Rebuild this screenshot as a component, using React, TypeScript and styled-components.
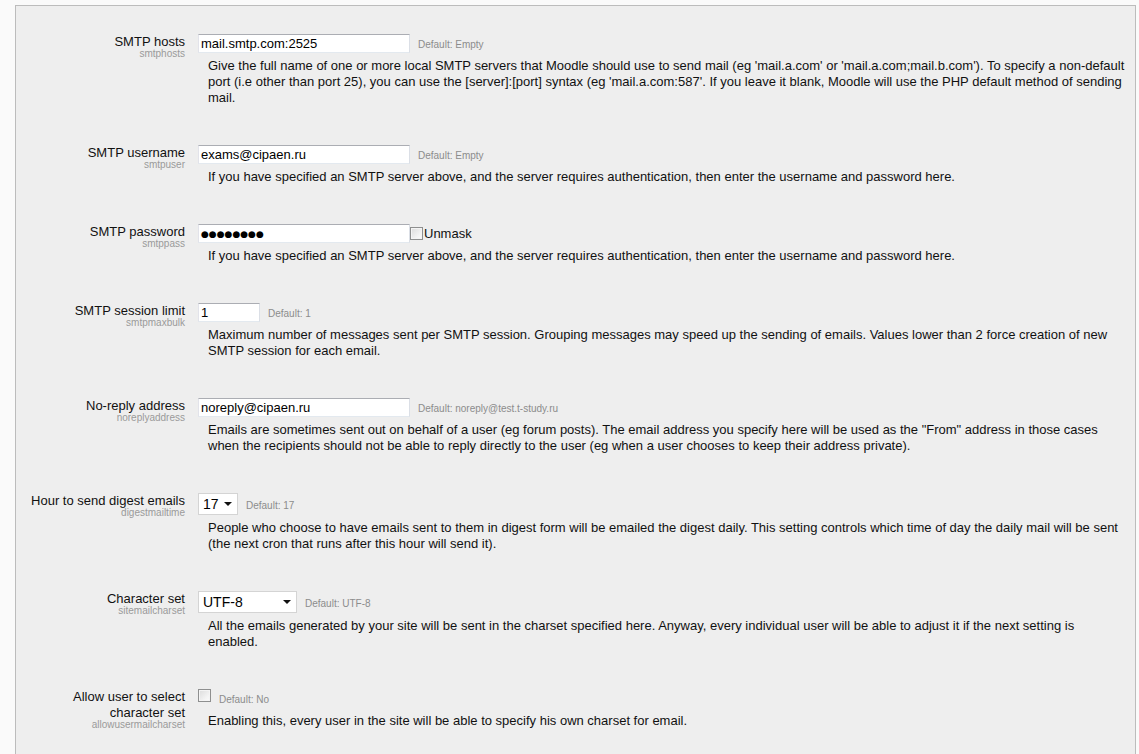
import React from "react";
import styled, { createGlobalStyle } from "styled-components";

const Global = createGlobalStyle`
  html, body { margin: 0; padding: 0; background: #fafafa; }
  body { font-family: "Liberation Sans", Arial, sans-serif; color: #222; }
`;

const Page = styled.div`
  padding: 5px 3px 0 15px;
`;

const Panel = styled.div`
  background: #eeeeee;
  border: 1px solid #bcbcbc;
  border-bottom: none;
  padding: 28px 10px 40px 0;
  min-height: 740px;
  box-sizing: border-box;
`;

const Item = styled.div`
  display: grid;
  grid-template-columns: 169px 1fr;
  column-gap: 13px;
  margin-bottom: 39px;
`;

const LabelCol = styled.div`
  text-align: right;
`;

const LabelText = styled.div`
  font-size: 13px;
  line-height: 16px;
  color: #111;
`;

const ShortName = styled.div`
  font-size: 10px;
  line-height: 10px;
  margin-top: -1px;
  color: #9a9a9a;
`;

const SettingCol = styled.div`
  display: flex;
  flex-direction: column;
`;

const ControlRow = styled.div`
  display: flex;
  align-items: center;
  min-height: 19px;
`;

const TextInput = styled.input<{ $w: number }>`
  width: ${(p) => p.$w}px;
  height: 19px;
  box-sizing: border-box;
  margin: 0;
  padding: 0 2px;
  font-family: "Liberation Sans", Arial, sans-serif;
  font-size: 13px;
  color: #000;
  background: #fff;
  border: 1px solid;
  border-color: #abadb3 #dbdfe6 #e3e9ef #e2e3ea;
  outline: none;
`;

const MaskField = styled.div<{ $w: number }>`
  width: ${(p) => p.$w}px;
  height: 19px;
  box-sizing: border-box;
  padding: 0 2px;
  display: flex;
  align-items: center;
  background: #fff;
  border: 1px solid;
  border-color: #abadb3 #dbdfe6 #e3e9ef #e2e3ea;
  font-family: "DejaVu Sans", sans-serif;
  font-size: 9px;
  letter-spacing: 0;
  color: #000;
`;

const SelectBox = styled.div<{ $w: number }>`
  width: ${(p) => p.$w}px;
  height: 22px;
  box-sizing: border-box;
  display: flex;
  align-items: center;
  justify-content: space-between;
  padding: 0 5px 0 4px;
  background: #fff;
  border: 1px solid #d4d4d4;
  font-size: 14px;
  color: #000;
`;

const Caret = styled.span`
  width: 0;
  height: 0;
  border-left: 4px solid transparent;
  border-right: 4px solid transparent;
  border-top: 4px solid #111;
`;

const CheckBox = styled.span<{ $top?: boolean }>`
  display: inline-block;
  align-self: ${(p) => (p.$top ? "flex-start" : "center")};
  width: 13px;
  height: 13px;
  box-sizing: border-box;
  border: 1px solid #8e8f8f;
  background: linear-gradient(135deg, #dcdcdc 0%, #f4f4f4 70%, #fbfbfb 100%);
  box-shadow: inset 0 0 0 1px #f4f4f4;
`;

const CheckLabel = styled.span`
  font-size: 13px;
  color: #111;
  margin-left: 1px;
`;

const DefaultText = styled.span`
  font-size: 10px;
  color: #8c8c8c;
  margin-left: 8px;
  margin-top: 2px;
`;

const Description = styled.div`
  margin: 5px 0 0 10px;
  font-size: 13px;
  line-height: 16px;
  color: #111;
`;

type Control =
  | { kind: "text"; value: string; w: number }
  | { kind: "password"; w: number }
  | { kind: "select"; value: string; w: number }
  | { kind: "checkbox" };

interface Setting {
  label: string;
  short: string;
  control: Control;
  def?: string;
  desc: string;
}

const settings: Setting[] = [
  {
    label: "SMTP hosts",
    short: "smtphosts",
    control: { kind: "text", value: "mail.smtp.com:2525", w: 212 },
    def: "Default: Empty",
    desc:
      "Give the full name of one or more local SMTP servers that Moodle should use to send mail (eg 'mail.a.com' or 'mail.a.com;mail.b.com'). To specify a non-default port (i.e other than port 25), you can use the [server]:[port] syntax (eg 'mail.a.com:587'. If you leave it blank, Moodle will use the PHP default method of sending mail.",
  },
  {
    label: "SMTP username",
    short: "smtpuser",
    control: { kind: "text", value: "exams@cipaen.ru", w: 212 },
    def: "Default: Empty",
    desc:
      "If you have specified an SMTP server above, and the server requires authentication, then enter the username and password here.",
  },
  {
    label: "SMTP password",
    short: "smtppass",
    control: { kind: "password", w: 212 },
    desc:
      "If you have specified an SMTP server above, and the server requires authentication, then enter the username and password here.",
  },
  {
    label: "SMTP session limit",
    short: "smtpmaxbulk",
    control: { kind: "text", value: "1", w: 62 },
    def: "Default: 1",
    desc:
      "Maximum number of messages sent per SMTP session. Grouping messages may speed up the sending of emails. Values lower than 2 force creation of new SMTP session for each email.",
  },
  {
    label: "No-reply address",
    short: "noreplyaddress",
    control: { kind: "text", value: "noreply@cipaen.ru", w: 212 },
    def: "Default: noreply@test.t-study.ru",
    desc:
      'Emails are sometimes sent out on behalf of a user (eg forum posts). The email address you specify here will be used as the "From" address in those cases when the recipients should not be able to reply directly to the user (eg when a user chooses to keep their address private).',
  },
  {
    label: "Hour to send digest emails",
    short: "digestmailtime",
    control: { kind: "select", value: "17", w: 40 },
    def: "Default: 17",
    desc:
      "People who choose to have emails sent to them in digest form will be emailed the digest daily. This setting controls which time of day the daily mail will be sent (the next cron that runs after this hour will send it).",
  },
  {
    label: "Character set",
    short: "sitemailcharset",
    control: { kind: "select", value: "UTF-8", w: 99 },
    def: "Default: UTF-8",
    desc:
      "All the emails generated by your site will be sent in the charset specified here. Anyway, every individual user will be able to adjust it if the next setting is enabled.",
  },
  {
    label: "Allow user to select character set",
    short: "allowusermailcharset",
    control: { kind: "checkbox" },
    def: "Default: No",
    desc:
      "Enabling this, every user in the site will be able to specify his own charset for email.",
  },
];

function renderControl(c: Control) {
  switch (c.kind) {
    case "text":
      return <TextInput $w={c.w} type="text" value={c.value} readOnly />;
    case "password":
      return (
        <>
          <MaskField $w={c.w}>●●●●●●●●</MaskField>
          <CheckBox />
          <CheckLabel>Unmask</CheckLabel>
        </>
      );
    case "select":
      return (
        <SelectBox $w={c.w}>
          <span>{c.value}</span>
          <Caret />
        </SelectBox>
      );
    case "checkbox":
      return <CheckBox $top />;
  }
}

export default function App() {
  return (
    <>
      <Global />
      <Page>
        <Panel>
          {settings.map((s) => (
            <Item key={s.short}>
              <LabelCol>
                <LabelText>{s.label}</LabelText>
                <ShortName>{s.short}</ShortName>
              </LabelCol>
              <SettingCol>
                <ControlRow>
                  {renderControl(s.control)}
                  {s.def && <DefaultText>{s.def}</DefaultText>}
                </ControlRow>
                <Description>{s.desc}</Description>
              </SettingCol>
            </Item>
          ))}
        </Panel>
      </Page>
    </>
  );
}
